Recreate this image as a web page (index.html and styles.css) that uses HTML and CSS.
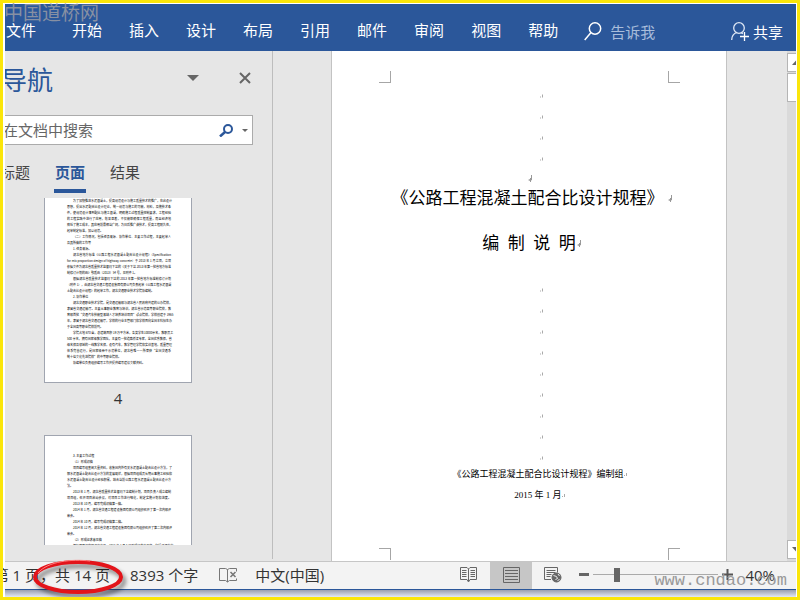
FILE: index.html
```html
<!DOCTYPE html>
<html>
<head>
<meta charset="utf-8">
<title>编制说明</title>
<link rel="stylesheet" href="styles.css">
</head>
<body>
<svg class="defs" aria-hidden="true">
  <symbol id="dot" viewBox="0 0 4 4"><path d="M0 3.5h1M2.5 1v3" stroke="#aaa" fill="none"/></symbol>
  <symbol id="enter" viewBox="0 0 5 8"><path d="M3.5 0v5H1M2.5 3v4M.5 5h2" stroke="#999" fill="none"/></symbol>
</svg>
<div class="frame">
  <header class="ribbon">
    <span class="site-name">中国道桥网</span>
    <nav class="menu">
      <a class="file" href="#">文件</a><a href="#">开始</a><a href="#">插入</a><a href="#">设计</a><a href="#">布局</a><a href="#">引用</a><a href="#">邮件</a><a href="#">审阅</a><a href="#">视图</a><a href="#">帮助</a>
    </nav>
    <button class="tell">
      <svg width="18" height="19" viewBox="0 0 18 19" fill="none" stroke="#fff" stroke-width="1.5"><circle cx="11" cy="6.5" r="5.7"/><path d="M7 10.5L.7 18"/></svg>
      告诉我
    </button>
    <button class="share">
      <svg width="18" height="19" viewBox="0 0 18 19" fill="none" stroke="#dfe8f5" stroke-width="1.3"><circle cx="8" cy="6" r="5.3"/><path d="M.7 18c0-4 2-6.300 5-7.500M10 10.700l2 1"/><path d="M13.500 10v9M9 14.500h9" stroke="#fff"/></svg>
      共享
    </button>
  </header>

  <main class="workspace">
    <aside class="nav-pane">
      <div class="nav-head">
        <h1>导航</h1>
        <button aria-label="选项"><svg width="12" height="6"><path d="M0 0h12L6 6z" fill="#666"/></svg></button>
        <button aria-label="关闭"><svg width="12" height="12" viewBox="0 0 12 12"><path d="M1 1l10 10M11 1L1 11" stroke="#666" stroke-width="2"/></svg></button>
      </div>
      <div class="search">
        <input type="text" aria-label="在文档中搜索" placeholder="在文档中搜索">
        <button aria-label="搜索"><svg width="14" height="13" viewBox="0 0 14 13" fill="none" stroke="#2b579a"><circle cx="9" cy="5" r="4" stroke-width="2"/><path d="M6 8l-5 4.500" stroke-width="2.500"/></svg></button>
        <button aria-label="搜索选项"><svg width="6" height="3"><path d="M0 0h6L3 3z" fill="#666"/></svg></button>
      </div>
      <div class="tabs">
        <button>标题</button><button class="active">页面</button><button>结果</button>
      </div>
      <div class="thumbs">
        <figure>
          <div class="sheet first">
            <p class="in full">为了加快推进水泥混凝土，提高规范设计与施工质量技术的推广，在此设计</p>
            <p class="full">思想，提出水泥配合比设计理论，统一规范与施工的可能，材料，及施技术条</p>
            <p class="full">件，使规范设计落到配比与施工混凝，明确施工过程质量控制要求，工程经验</p>
            <p class="full">的工程实践中进行了应用，效果显著，不仅能够确保工程质量，而且经济地</p>
            <p class="full">降低了施工成本，其应用前景相当广阔，为日后推广该技术，提高工程耐久性，</p>
            <p>起草制定标准，加以规范。</p>
            <p class="in full">（二）工作情况，包括任务来源、协作单位、主要工作过程，主要起草人</p>
            <p>及其所做的工作等</p>
            <p class="in">1. 任务来源。</p>
            <p class="in full">湖北省地方标准《公路工程水泥混凝土配合比设计规程》（Specification</p>
            <p class="full">for mix proportion design of highway concrete）于 2013 年 1 月立项，立项</p>
            <p class="full">依据文件为湖北省质量技术监督局下达的《关于下达 2013 年第一批省地方标准</p>
            <p>制修订计划的函》鄂质函〔2013〕54 号，见附件 1。</p>
            <p class="in full">根据湖北省质量技术监督局下达的 2013 年第一批省地方标准制修订计划</p>
            <p class="full">（附件 1），由湖北省交通工程建设集团有限公司负责起草《公路工程水泥混凝</p>
            <p>土配合比设计规程》的起草工作，湖北交通职业技术学院协编制。</p>
            <p class="in">2. 协作单位</p>
            <p class="in full">湖北交通职业技术学院，是交通运输部与湖北省人民政府共建的公办院校，</p>
            <p class="full">隶属省交通运输厅。主要从事职业教育与培训，湖北省示范高等职业院校，教</p>
            <p class="full">育部首批“交通汽车技能型紧缺人才培养培训项目”试点院校，学校创建于 1965</p>
            <p class="full">年，隶属于湖北省交通运输厅，学校的行业主管部门和学校面向全国本科招生办</p>
            <p>于全国高等职业院校前列。</p>
            <p class="in full">学院占地 670 亩，总建筑面积 19 万平方米，各类学生10000余名，教职员工</p>
            <p class="full">500 余名，拥有国家级教学团队，主要有一批道路桥梁专家，全国优秀教师，省</p>
            <p class="full">级名师及领域的一线教学名师，设有汽车，教学管理学院和实训基地，质量管理</p>
            <p class="full">体系完善运行，是国家级骨干示范单位，湖北省唯一一所荣获“全国交通系</p>
            <p>统十佳文化先进院校”的中等职业院校。</p>
            <p class="in">协编单位负责组织编写工作并提供编写建议文献资料。</p>
          </div>
          <figcaption>4</figcaption>
        </figure>
        <figure>
          <div class="sheet second">
            <p class="in">3. 主要工作过程</p>
            <p class="in">（1）形成初稿</p>
            <p class="in full">项目编写组查阅大量资料，收集国内外有关水泥混凝土配合比设计方法，了</p>
            <p class="full">解水泥混凝土配合比设计方法的发展现状，根据项目组成员长期从事施工经验和</p>
            <p class="full">水泥混凝土配合比设计经验积累，结合当前公路工程水泥混凝土配合比设计方</p>
            <p>法。</p>
            <p class="in full">2013 年 1 月，湖北省质量技术监督局下达编制计划，项目负责人成立编制</p>
            <p class="full">项目组，召开项目启动会议，对项目工作进行细化，制定实施计划和进度。</p>
            <p class="in">2013 年 10 月，编写完成初稿第一稿。</p>
            <p class="in full">2014 年 1 月，湖北省交通工程建设集团有限公司组织召开了第一次内部评</p>
            <p>审会。</p>
            <p class="in">2014 年 10 月，编写完成初稿第二稿。</p>
            <p class="in full">2014 年 12 月，湖北省交通工程建设集团有限公司组织召开了第二次内部评</p>
            <p>审会。</p>
            <p class="in">（2）形成征求意见稿</p>
            <p class="in full">根据项目组内部评审意见，2015 年 1 月 5 日形成征求意见稿，包括了湖北省</p>
          </div>
        </figure>
      </div>
    </aside>

    <section class="canvas">
      <article class="page">
        <div class="crops top"><i></i><i></i></div>
        <div class="marks upper">
          <svg><use href="#dot"/></svg><svg><use href="#dot"/></svg><svg><use href="#dot"/></svg><svg><use href="#dot"/></svg>
        </div>
        <p class="blank"><svg class="enter"><use href="#enter"/></svg></p>
        <h2>《公路工程混凝土配合比设计规程》<svg class="enter"><use href="#enter"/></svg></h2>
        <h2 class="sub">编  制  说  明<svg class="enter"><use href="#enter"/></svg></h2>
        <div class="marks">
          <svg><use href="#dot"/></svg><svg><use href="#dot"/></svg><svg><use href="#dot"/></svg><svg><use href="#dot"/></svg><svg><use href="#dot"/></svg><svg><use href="#dot"/></svg><svg><use href="#dot"/></svg><svg><use href="#dot"/></svg><svg><use href="#dot"/></svg>
        </div>
        <p class="small">《公路工程混凝土配合比设计规程》编制组<svg class="dot"><use href="#dot"/></svg></p>
        <p class="small">2015 年 1 月<svg class="dot"><use href="#dot"/></svg></p>
        <div class="crops bottom"><i></i><i></i></div>
      </article>
    </section>
    <div class="scrollbar">
      <button aria-label="向上"><svg width="9" height="5"><path d="M0 5h9L4.500 0z" fill="#666"/></svg></button>
      <div class="handle"></div>
      <button class="down" aria-label="向下"><svg width="9" height="5"><path d="M0 0h9L4.500 5z" fill="#666"/></svg></button>
    </div>
  </main>

  <footer class="status">
    <div class="pages">第 1 页，<span class="total">共 14 页<svg class="ring" width="100" height="48" viewBox="0 0 100 48" fill="none"><ellipse cx="48" cy="21" rx="43" ry="15" stroke="#e3141a" stroke-width="4"/><path d="M8 17C18 5 42 3 60 5" stroke="#ff8080" stroke-width="1"/></svg></span></div>
    <div class="words">8393 个字</div>
    <svg class="proof" width="18" height="16" viewBox="0 0 18 16" fill="none" stroke="#777"><path d="M8.500 2.500L6.500 1.500H.5v12h6l2 1.500 2-1.500h7v-2M8.500 2.500V15M8.500 2.500l2-1h7v3"/><path d="M11.500 5l5 5M16.500 5l-5 5" stroke-width="1.600"/></svg>
    <div class="lang">中文(中国)</div>
    <div class="views">
      <button aria-label="阅读视图"><svg width="18" height="16" viewBox="0 0 18 16" fill="none" stroke="#666"><path d="M8.500 2L7 .5H.5v12H7L8.500 15 10 12.500h6.500V.5H10zM8.500 2v12M2 3.500h4.500M2 5.500h4.500M2 7.500h4.500M2 9.500h4.500M10.500 3.500H15M10.500 5.500H15M10.500 7.500H15M10.500 9.500H15"/></svg></button>
      <button class="on" aria-label="页面视图"><svg width="17" height="16" viewBox="0 0 17 16" fill="none" stroke="#666"><path d="M.5.5h16v15H.5zM2 3.500h13M2 6.500h13M2 9.500h13M2 12.500h13"/></svg></button>
      <button aria-label="Web 版式"><svg width="18" height="16" viewBox="0 0 18 16" fill="none" stroke="#666"><path d="M7 12.500H.5V.5h13v5M2.500 3.500h9M2.500 5.500h9M2.500 7.500h5M2.500 9.500h4"/><circle cx="12.500" cy="10.500" r="4.500" fill="#666"/><path d="M9.500 8.500l3 1 1 2-2 1M14 7l1.500 2M13.500 14l2-2" stroke="#eee"/></svg></button>
    </div>
    <div class="zoom">
      <button aria-label="缩小"><svg width="10" height="3"><path d="M0 1.500h10" stroke="#666" stroke-width="3"/></svg></button>
      <input type="range" aria-label="缩放" min="0" max="100" value="17">
      <button aria-label="放大"><svg width="11" height="11"><path d="M0 5.500h11M5.500 0v11" stroke="#555" stroke-width="2"/></svg></button>
      <span class="percent">40%</span>
    </div>
    <span class="site-url">www.cndao.com</span>
  </footer>
  <div class="under"></div>
</div>
</body>
</html>
```
FILE: styles.css
```css
* { box-sizing: border-box; }
body {
  margin: 0;
  font: 15px/20px "Open Sans", "Noto Sans CJK SC", sans-serif;
  color: #333;
}
p, h1, h2, figure { margin: 0; font-weight: 400; }
button { border: 0; padding: 0; background: none; font: inherit; color: inherit; display: flex; align-items: center; justify-content: center; }
svg { display: block; flex: none; }
.defs { position: absolute; width: 0; height: 0; }

.frame {
  height: 100vh;
  display: flex;
  flex-direction: column;
  border: 3px solid #fbe60a;
  padding: 1px 1px 0 2px;
  background: #fff;
  overflow: hidden;
}

/* ribbon */
.ribbon {
  position: relative;
  flex: none;
  height: 47px;
  display: flex;
  align-items: center;
  padding: 8px 13px 0 1px;
  background: #2b579a;
  color: #fff;
}
.menu { display: flex; gap: 27px; padding-bottom: 4px; }
.menu a { color: #fff; text-decoration: none; white-space: nowrap; }
.menu .file { margin-right: 9px; }
.tell { gap: 8px; margin-left: 26px; color: #a9bddb; }
.share { gap: 4px; margin-left: auto; }
.site-name {
  position: absolute;
  left: -1px;
  top: -1px;
  font-size: 19px;
  color: #8790a3;
}

/* workspace */
.workspace { flex: 1; min-height: 0; display: flex; background: #e6e6e6; }
.nav-pane {
  width: 268px;
  flex: none;
  display: flex;
  flex-direction: column;
  overflow: hidden;
  border-right: 1px solid #bdbdbd;
  margin-bottom: 2px;
}
.nav-head { display: flex; align-items: center; height: 56px; margin: 0 21px 0 -4px; padding-bottom: 2px; gap: 40px; }
.nav-head h1 { font: 26px/36px "Noto Sans CJK SC", sans-serif; color: #2b579a; margin-right: auto; padding-top: 2px; }
.search {
  display: flex;
  align-items: center;
  height: 30px;
  flex: none;
  margin: 8px 19px 0 -4px;
  padding-right: 4px;
  gap: 9px;
  border: 1px solid #ababab;
  background: #fff;
}
.search input { flex: 1; min-width: 0; border: 0; padding: 0 1px; background: none; font: inherit; outline: 0; }
.search input::placeholder { color: #666; }
.tabs { display: flex; gap: 23px; height: 48px; flex: none; margin-left: -6px; color: #444; }
.tabs button { height: 48px; padding: 10px 1px 0; border-bottom: 4px solid transparent; }
.tabs .active { color: #2b579a; font-weight: 700; border-color: #2b579a; }
.thumbs { flex: 1; min-height: 0; overflow: hidden; margin: 5px 80px 14px 39px; }
.sheet {
  border: 1px solid #a0a5b0;
  background: #fff;
  padding: 20px 20px 0 22px;
  font: 3px/6px "Noto Sans CJK SC", sans-serif;
  font-weight: 700;
  color: #000;
  height: 209px;
}
.first { border-top: 0; height: 185px; padding-top: 0; }
.second { padding-top: 17px; }
.sheet p { white-space: nowrap; }
.sheet .in { padding-left: 6px; }
.sheet .full { text-align-last: justify; }
figcaption { text-align: center; line-height: 20px; padding: 5px 0 27px; }

.canvas { flex: 1; min-width: 0; padding: 0 60px 0 58px; display: flex; }
.page {
  flex: 1;
  min-width: 0;
  display: flex;
  flex-direction: column;
  background: #fff;
  border: 1px solid #c3c3c3;
  border-width: 0 1px;
  text-align: center;
  color: #000;
}
.crops { display: flex; justify-content: space-between; padding: 0 46px 0 47px; }
.crops i { width: 12px; height: 12px; border: 0 solid #a6a6a6; }
.crops.top { padding-top: 20px; }
.crops.top i { border-bottom-width: 1px; }
.crops.bottom i { border-top-width: 1px; }
.crops i:first-child { border-right-width: 1px; }
.crops i:last-child { border-left-width: 1px; }
.crops.bottom { margin-top: auto; padding-bottom: 1px; }
.marks { display: flex; flex-direction: column; align-items: center; padding-left: 25px; margin-top: 25px; }
.marks.upper { margin-top: 2px; }
.marks svg { width: 4px; height: 21px; }
.blank, .page h2, .small { display: flex; justify-content: center; align-items: center; white-space: pre; }
.blank { height: 19px; padding-left: 3px; }
.enter { width: 5px; height: 8px; }
.page h2 { font: 17px/21px "Liberation Serif", "Noto Sans CJK SC", serif; gap: 4px; padding-left: 6px; }
.page .sub { margin-top: 24px; gap: 1px; }
.small { font: 9px/12px "Liberation Serif", "Noto Sans CJK SC", serif; padding-left: 22px; }
.small + .small { margin-top: 9px; }
.dot { width: 4px; height: 4px; }

.scrollbar { width: 9px; flex: none; display: flex; flex-direction: column; gap: 1px; padding: 2px 0; background: #dadada; }
.scrollbar button, .handle { height: 19px; border: 1px solid #b5b5b5; border-right: 0; background: #fff; overflow: hidden; justify-content: flex-start; padding-left: 4px; }
.handle { height: 29px; }
.scrollbar .down { margin-top: auto; }

/* status bar */
.status {
  position: relative;
  flex: none;
  height: 29px;
  display: flex;
  align-items: center;
  background: #f3f3f3;
  border-top: 1px solid #c6c6c6;
  border-bottom: 1px solid #2b579a;
  padding-bottom: 2px;
  white-space: nowrap;
}
.pages { margin-left: -12px; display: flex; width: 117px; justify-content: flex-end; }
.total { position: relative; }
.ring { position: absolute; left: -25px; top: -9px; filter: drop-shadow(3px 4px 2px #0007); }
.words { margin-left: 20px; }
.proof { margin-left: 21px; }
.lang { margin-left: 18px; }
.views { display: flex; align-self: stretch; margin: 0 0 -2px auto; }
.views button { width: 42px; padding-bottom: 2px; }
.views .on { background: #c6c6c6; }
.zoom { display: flex; align-items: center; gap: 4px; margin: 0 21px 0 5px; }
.zoom input { appearance: none; width: 125px; height: 14px; margin: 0; background: linear-gradient(#aaa, #aaa) center / 100% 1px no-repeat; }
.zoom input::-webkit-slider-thumb { appearance: none; width: 6px; height: 14px; background: #666; }
.percent { margin-left: 8px; }
.site-url {
  position: absolute;
  right: 9px;
  bottom: -3px;
  font: 17px/22px "Liberation Mono", monospace;
  color: #999;
}
.under { flex: none; height: 7px; background: linear-gradient(#9a9fae, #e4e9f5); }
```
